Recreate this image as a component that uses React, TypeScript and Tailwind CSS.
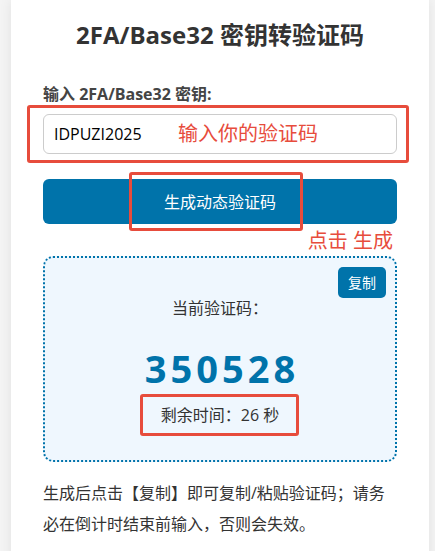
import React, { useState } from 'react';

const font = { fontFamily: '"Open Sans", "Noto Sans CJK SC", sans-serif' };

const App: React.FC = () => {
  const [secret, setSecret] = useState('IDPUZI2025');

  return (
    <div className="min-h-[551px] bg-[#f4f4f4]" style={font}>
      <div className="ml-[11px] w-[418px] min-h-[551px] bg-white px-8 pt-[19px] pb-6 shadow-[0_0_12px_rgba(0,0,0,0.08)]">
        <h1 className="text-center text-[24px] font-bold leading-[32px] text-[#333]">
          2FA/Base32 密钥转验证码
        </h1>

        <label className="mt-[32px] block text-[16px] font-bold leading-[22px] text-[#444]">
          输入 2FA/Base32 密钥:
        </label>

        <div className="relative mt-[9px]">
          <input
            type="text"
            value={secret}
            onChange={(e) => setSecret(e.target.value)}
            className="h-[40px] w-full rounded-md border border-[#ccc] bg-white px-[10px] text-[16px] text-black outline-none"
          />
          <span className="pointer-events-none absolute left-[135px] top-[8px] text-[20px] leading-[24px] text-[#e74c3c]">
            输入你的验证码
          </span>
          <div className="pointer-events-none absolute -left-[16px] -right-[12px] -top-[9px] -bottom-[9px] rounded-[3px] border-[3px] border-[#e74c3c]" />
        </div>

        <div className="relative mt-[25px]">
          <button
            type="button"
            className="h-[45px] w-full rounded-md bg-[#0073aa] text-[16px] text-white"
          >
            生成动态验证码
          </button>
          <div className="pointer-events-none absolute left-[86px] top-[-7px] h-[59px] w-[174px] rounded-[3px] border-[3px] border-[#e74c3c]" />
        </div>

        <div className="mt-[4px] pr-[4px] text-right text-[20px] leading-[26px] text-[#e74c3c]">
          点击 生成
        </div>

        <div className="relative mt-[2px] flex h-[206px] flex-col items-center rounded-[10px] border-2 border-dotted border-[#0073aa] bg-[#eff7fe]">
          <button
            type="button"
            className="absolute right-[9px] top-[9px] h-[31px] rounded-[5px] bg-[#0073aa] px-[10px] text-[14px] text-white"
          >
            复制
          </button>
          <div className="mt-[38px] text-[16px] leading-[24px] text-[#333]">当前验证码：</div>
          <div className="mt-[25px] pl-[4px] text-[38px] font-bold leading-[46px] tracking-[4px] text-[#0073aa]">
            350528
          </div>
          <div className="relative mt-[12px] text-[16px] leading-[24px] text-[#333]">
            剩余时间：26 秒
            <div className="pointer-events-none absolute -left-[21px] -right-[20px] -top-[9px] -bottom-[9px] rounded-[3px] border-[3px] border-[#e74c3c]" />
          </div>
        </div>

        <p className="mt-[16px] text-[16px] leading-[31px] text-[#333]">
          生成后点击【复制】即可复制/粘贴验证码；请务必在倒计时结束前输入，否则会失效。
        </p>
      </div>
    </div>
  );
};

export default App;
